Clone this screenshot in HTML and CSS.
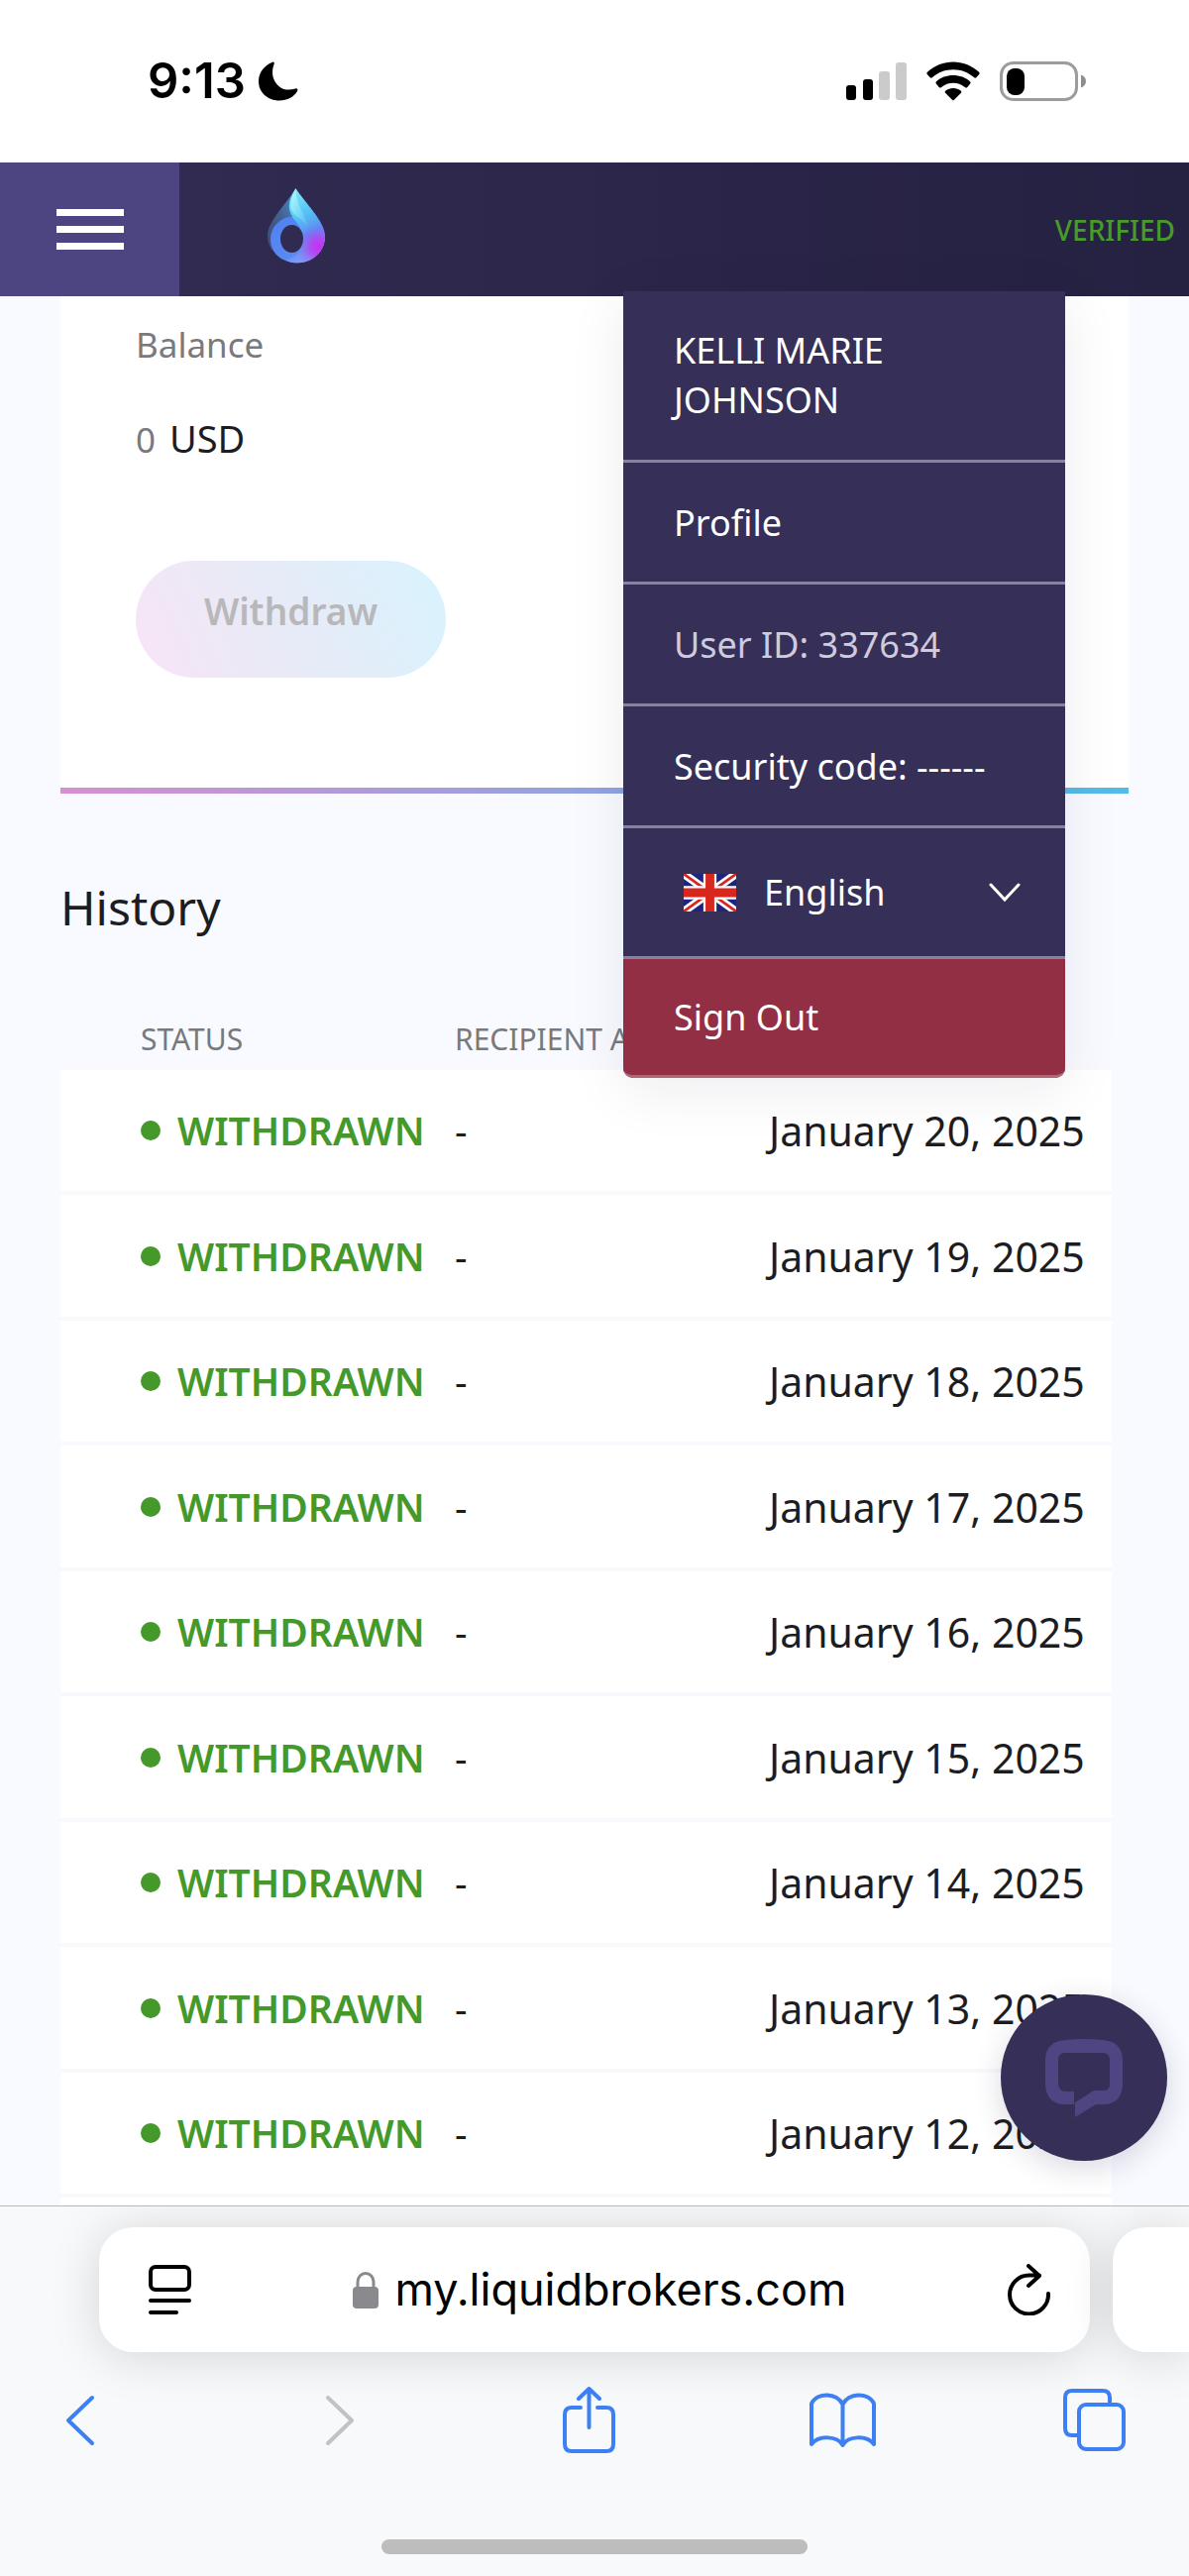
FILE: index.html
```html
<!DOCTYPE html>
<html lang="en">
<head>
<meta charset="utf-8">
<meta name="viewport" content="width=device-width, initial-scale=1">
<title>Liquid Brokers – Withdraw</title>
<link rel="stylesheet" href="styles.css">
</head>
<body>
<div class="status-bar">
  <span class="clock">9:13</span>
  <svg class="moon" width="40" height="40" viewBox="0 0 40 40" aria-hidden="true"><path d="M13.500 1C15 0 16.500 1 15.500 3C12 12 15 21 21 25.500C26 29.500 32 29 37 27.500C39 27 40 28 39 30C35.500 36 29 39.500 21 39.500C9 39.500 0 31 0 20C0 11 6 4 13.500 1Z"/></svg>
  <div class="status-icons">
    <svg width="61" height="40" viewBox="0 0 61 40" aria-hidden="true"><rect y="24" width="10" height="15" rx="3"/><rect x="17" y="18" width="10" height="21" rx="3"/><g fill="#cbcbcb"><rect x="33" y="10" width="11" height="29" rx="3"/><rect x="50" y="1" width="11" height="38" rx="3"/></g></svg>
    <svg width="54" height="40" viewBox="0 0 54 40" aria-hidden="true"><path d="M1.200 13.500a2 2 0 0 1 0-3C8.500 4 17.500.500 27 .500S45.500 4 52.800 10.500a2 2 0 0 1 0 3L50.500 16a1.800 1.800 0 0 1-2.600 0C42 11 35 8.300 27 8.300S12 11 6.100 16a1.800 1.800 0 0 1-2.600 0Z"/><path d="M10 22.800a1.800 1.800 0 0 1 0-2.600C14.500 16.200 20.500 14 27 14s12.500 2.200 17 6.200a1.800 1.800 0 0 1 0 2.600L41.300 26a1.800 1.800 0 0 1-2.500 0C35.500 23.300 31.500 21.800 27 21.800S18.500 23.300 15.200 26a1.800 1.800 0 0 1-2.500 0Z"/><path d="M19.300 32a1.600 1.600 0 0 1 .1-2.500C21.500 28 24 27 27 27s5.500 1 7.600 2.500a1.600 1.600 0 0 1 .1 2.500L28 38.800a1.400 1.400 0 0 1-2 0Z"/></svg>
    <svg width="88" height="40" viewBox="0 0 88 40" aria-hidden="true"><rect x="1.500" y="1.500" width="76" height="37" rx="12" fill="none" stroke="#9c9c9c" stroke-width="3"/><rect x="7" y="7" width="18" height="27" rx="8"/><path d="M82 13.500c3 1 5 3.500 5 6.500s-2 5.500-5 6.500Z" fill="#8e8e8e"/></svg>
  </div>
</div>

<header class="site-header">
  <button class="menu-toggle" type="button" aria-label="Open menu"><span></span><span></span><span></span></button>
  <a class="logo" href="#" aria-label="Home">
    <svg width="58" height="76" viewBox="0 0 58 76" aria-hidden="true">
      <defs>
        <linearGradient id="dropBody" x1="0.300" y1="0" x2="0.600" y2="1"><stop offset="0" stop-color="#7deafb"/><stop offset=".35" stop-color="#57c3f5"/><stop offset=".65" stop-color="#5a8df0"/><stop offset="1" stop-color="#8f9cf6"/></linearGradient>
        <radialGradient id="dropGlow" gradientUnits="userSpaceOnUse" cx="52" cy="59" r="24"><stop offset="0" stop-color="#c92df2"/><stop offset=".4" stop-color="#b83df2" stop-opacity=".8"/><stop offset="1" stop-color="#7a78f2" stop-opacity="0"/></radialGradient>
        <linearGradient id="dropRing" x1="0" y1="0" x2="1" y2="1"><stop offset="0" stop-color="#4f80ee"/><stop offset=".7" stop-color="#5a8bf6"/><stop offset="1" stop-color="#8f7bf5"/></linearGradient>
        <linearGradient id="dropBack" x1="1" y1="0" x2="0" y2="1"><stop offset="0" stop-color="#4d8fd8"/><stop offset=".5" stop-color="#42608f"/><stop offset="1" stop-color="#3c4a7c"/></linearGradient>
        <linearGradient id="dropShine" x1="0" y1="0" x2="1" y2="1"><stop offset="0" stop-color="#b5fbff"/><stop offset="1" stop-color="#79d8f8" stop-opacity=".2"/></linearGradient>
      </defs>
      <path d="M28.500 0C20 15 0 33 0 48c0 6 2 11 5 15l18-30Z" fill="url(#dropBack)"/>
      <path d="M26 28C12 30 3 39 3 52c0 13 11 23 26 23 16 0 29-11 29-27L36 30Z" fill="url(#dropRing)"/>
      <path d="M28.500 0C37 14 58 33 58 48c0 16-12 27.500-29 27.500-3 0-8-1-11-3C30 70 36 62 36 51c0-7-3-12-7-17C19 24 20 13 28.500 0Z" fill="url(#dropBody)"/>
      <path d="M28.500 0C37 14 58 33 58 48c0 16-12 27.500-29 27.500-3 0-8-1-11-3C30 70 36 62 36 51c0-7-3-12-7-17C19 24 20 13 28.500 0Z" fill="url(#dropGlow)"/>
      <path d="M28.500 1C21 14 22 22 29 28c4 3 8 5 11 11C38 25 29 18 28.500 1Z" fill="url(#dropShine)"/>
      <ellipse cx="24.500" cy="51" rx="11.500" ry="14" fill="#322b51"/>
    </svg>
  </a>
  <span class="verified">VERIFIED</span>

  <nav class="user-menu" aria-label="Account">
    <div class="menu-item user-name">KELLI MARIE JOHNSON</div>
    <a class="menu-item" href="#">Profile</a>
    <div class="menu-item muted">User ID: 337634</div>
    <div class="menu-item">Security code: ------</div>
    <button class="menu-item language" type="button">
      <svg class="flag" width="53" height="38" viewBox="0 0 60 42" preserveAspectRatio="none" aria-hidden="true"><rect width="60" height="42" fill="#1d2580"/><path d="M0 0 60 42M60 0 0 42" stroke="#fff" stroke-width="9"/><path d="M0 0 60 42M60 0 0 42" stroke="#d8281e" stroke-width="3"/><path d="M30 0V42M0 21H60" stroke="#fff" stroke-width="15"/><path d="M30 0V42M0 21H60" stroke="#d8281e" stroke-width="10"/></svg>
      <span>English</span>
      <svg class="chevron" width="32" height="20" viewBox="0 0 32 20" aria-hidden="true"><path d="M2 2 16 17 30 2" fill="none" stroke="#fff" stroke-width="3" stroke-linecap="round"/></svg>
    </button>
    <button class="menu-item sign-out" type="button">Sign Out</button>
  </nav>
</header>

<main class="content">
  <section class="balance-card">
    <p class="label">Balance</p>
    <p class="amount"><span>0</span> USD</p>
    <button class="withdraw" type="button" disabled>Withdraw</button>
  </section>

  <section class="history">
    <h2>History</h2>
    <table>
      <colgroup><col class="col-status"><col class="col-recipient"><col></colgroup>
      <thead><tr><th>STATUS</th><th>RECIPIENT A</th><th></th></tr></thead>
      <tbody>
        <tr><td><span class="state">WITHDRAWN</span></td><td>-</td><td>January 20, 2025</td></tr>
        <tr><td><span class="state">WITHDRAWN</span></td><td>-</td><td>January 19, 2025</td></tr>
        <tr><td><span class="state">WITHDRAWN</span></td><td>-</td><td>January 18, 2025</td></tr>
        <tr><td><span class="state">WITHDRAWN</span></td><td>-</td><td>January 17, 2025</td></tr>
        <tr><td><span class="state">WITHDRAWN</span></td><td>-</td><td>January 16, 2025</td></tr>
        <tr><td><span class="state">WITHDRAWN</span></td><td>-</td><td>January 15, 2025</td></tr>
        <tr><td><span class="state">WITHDRAWN</span></td><td>-</td><td>January 14, 2025</td></tr>
        <tr><td><span class="state">WITHDRAWN</span></td><td>-</td><td>January 13, 2025</td></tr>
        <tr><td><span class="state">WITHDRAWN</span></td><td>-</td><td>January 12, 2025</td></tr>
      </tbody>
    </table>
  </section>

  <button class="chat" type="button" aria-label="Open chat">
    <svg width="78" height="79" viewBox="0 0 78 79" aria-hidden="true"><path fill="#4e4582" fill-rule="evenodd" d="M20 1Q39-1 58 1C71 2 78 9 78 21V45C78 58 71 66 59 66H51L30 79V64L49 52H59Q65 52 65 46V21Q65 14 58 14H20Q13 14 13 21V44Q13 53 21 53H29V66H20C7 66 0 58 0 45V21C0 9 7 2 20 1Z"/></svg>
  </button>
</main>

<footer class="browser">
  <div class="tabs">
    <div class="address">
      <svg width="43" height="50" viewBox="0 0 43 50" fill="none" stroke="#000" stroke-width="4" stroke-linecap="round" aria-hidden="true"><rect x="2" y="2" width="39" height="23" rx="5"/><path d="M2 36H41M2 48H28"/></svg>
      <span class="url"><svg width="26" height="37" viewBox="0 0 26 37" aria-hidden="true"><path d="M5 18V10a8 8.500 0 0 1 16 0v8" fill="none" stroke="#8a8a8e" stroke-width="3"/><rect y="15" width="26" height="22" rx="4" fill="#8a8a8e"/></svg>my.liquidbrokers.com</span>
      <svg width="43" height="52" viewBox="0 0 43 52" fill="none" stroke="#000" stroke-width="4" stroke-linecap="round" stroke-linejoin="round" aria-hidden="true"><path d="M41 30A19.500 19.500 0 1 1 21.500 11.500H32M21 2 32 12 21 22"/></svg>
    </div>
    <div class="next-tab"></div>
  </div>
  <div class="toolbar">
    <button type="button" aria-label="Back"><svg width="30" height="52" viewBox="0 0 30 52"><path d="M27 3 3 26 27 49"/></svg></button>
    <button type="button" aria-label="Forward" disabled><svg width="30" height="52" viewBox="0 0 30 52"><path d="M3 3 27 26 3 49"/></svg></button>
    <button type="button" aria-label="Share"><svg width="53" height="67" viewBox="0 0 53 67"><path d="M18 21H9Q2 21 2 28V58Q2 65 9 65H44Q51 65 51 58V28Q51 21 44 21H35M26.500 41V2M16 12 26.500 2 37 12"/></svg></button>
    <button type="button" aria-label="Bookmarks"><svg width="67" height="56" viewBox="0 0 67 56"><path d="M33.500 12C28 0 8-1 2 11V52C9 43 28 43 33.500 53C39 43 58 43 65 52V11C59-1 39 0 33.500 12V52"/></svg></button>
    <button type="button" aria-label="Tabs"><svg width="63" height="63" viewBox="0 0 63 63"><path d="M47 15V9Q47 2 40 2H9Q2 2 2 9V40Q2 47 9 47H15"/><rect x="16" y="16" width="45" height="45" rx="7"/></svg></button>
  </div>
  <div class="home-indicator"></div>
</footer>
</body>
</html>
```

FILE: styles.css
```css
* { box-sizing: border-box; }

body {
  margin: 0;
  min-height: 100vh;
  display: flex;
  flex-direction: column;
  background: #f8faff;
  color: #1d1d1f;
  font-family: "Noto Sans", "Open Sans", sans-serif;
  font-size: 36px;
  line-height: 50px;
  overflow-x: hidden;
}

h2, p { margin: 0; font-weight: 400; }

button {
  border: 0;
  padding: 0;
  background: none;
  color: inherit;
  font: inherit;
}

svg { display: block; flex: none; }

/* Phone status bar */
.status-bar {
  display: flex;
  align-items: center;
  height: 164px;
  padding: 0 103px 0 149px;
  background: #fff;
}

.clock {
  font-family: Inter, sans-serif;
  font-size: 49px;
  font-weight: 600;
  color: #000;
}

.moon { margin-left: 13px; }

.status-icons {
  display: flex;
  gap: 20px;
  margin-left: auto;
}

/* Site header */
.site-header {
  position: relative;
  z-index: 2;
  display: flex;
  align-items: center;
  height: 135px;
  padding-right: 14px;
  background: linear-gradient(90deg, #342c54, #242141);
}

.menu-toggle {
  display: flex;
  flex-direction: column;
  align-items: center;
  justify-content: center;
  gap: 10px;
  align-self: stretch;
  width: 181px;
  background: #4d4581;
}

.menu-toggle span {
  width: 68px;
  height: 7px;
  background: #fff;
}

.logo { margin: 0 auto 8px 89px; }

.verified {
  color: #489b29;
  font-size: 28px;
  font-weight: 500;
}

/* Account drop-down */
.user-menu {
  position: absolute;
  top: 130px;
  right: 125px;
  width: 446px;
  background: #362f57;
  color: #fff;
  border-radius: 0 0 10px 10px;
  box-shadow: 0 12px 60px rgba(30, 25, 70, .08);
}

.menu-item {
  display: flex;
  align-items: center;
  width: 100%;
  padding: 36px 51px 34px;
  border-bottom: 3px solid #8682a0;
  color: #fff;
  text-align: left;
  text-decoration: none;
}

.user-name { padding: 35px 120px 35px 51px; }
.muted { color: #cfcbdf; }

.language { padding: 40px 45px 39px 61px; }
.language span { margin-left: 28px; }
.chevron { margin-left: auto; }

.sign-out {
  padding: 34px 51px 33px;
  background: #922f45;
  border-bottom-color: #ac6a7b;
  border-radius: 0 0 10px 10px;
}

/* Page */
.content {
  position: relative;
  padding: 0 61px;
}

.balance-card {
  padding: 24px 76px 111px;
  background: #fff;
  border-bottom: 6px solid;
  border-image: linear-gradient(90deg, #d78fd2, #8aa5e2 55%, #54bbe8 90%) 1;
}

.label {
  color: #7a7a7c;
  font-size: 35px;
}

.amount {
  margin: 44px 0 99px;
  font-size: 38px;
}

.amount span {
  margin-right: 4px;
  color: #7a7a7c;
  font-size: 35px;
  line-height: 1;
}

.withdraw {
  display: block;
  width: 313px;
  height: 118px;
  padding-bottom: 16px;
  border-radius: 59px;
  background: linear-gradient(65deg, #f8e4f6, #e6ebf7 50%, #d8f3fe);
  color: #b8b8ba;
  font-size: 37px;
  font-weight: 600;
}

.history h2 {
  padding: 83px 0 81px;
  font-size: 48px;
  line-height: 64px;
}

.history table {
  width: 100%;
  padding-right: 17px;
  table-layout: fixed;
  border-collapse: separate;
  border-spacing: 0;
}

.history::after {
  content: "";
  display: block;
  height: 8px;
  margin-right: 17px;
  background: #fff;
}

.col-status { width: 398px; }
.col-recipient { width: 317px; }

.history th {
  padding: 0 0 11px;
  color: #77797d;
  font-size: 30px;
  font-weight: 400;
  line-height: 40px;
  text-align: left;
  white-space: nowrap;
}

.history th:first-child,
.history td:first-child { padding-left: 81px; }

.history td {
  height: 126px;
  padding: 0;
  background: #fff;
  border-bottom: 4px solid #f8f9fd;
  font-size: 39px;
  white-space: nowrap;
}

.history tr:nth-child(even) td { height: 127px; }

.history td:last-child { font-size: 41px; }

.state {
  display: flex;
  align-items: center;
  gap: 17px;
  color: #45992a;
  font-weight: 600;
}

.state::before {
  content: "";
  width: 20px;
  height: 20px;
  border-radius: 50%;
  background: currentColor;
}

.chat {
  position: absolute;
  right: 22px;
  bottom: 45px;
  display: grid;
  place-items: center;
  width: 168px;
  height: 168px;
  border-radius: 50%;
  background: #362f57;
  box-shadow: 0 8px 30px rgba(30, 25, 70, .16);
}

/* Browser controls */
.browser {
  flex: 1;
  border-top: 1px solid #b8b8ba;
  background: #f8f9fb;
  overflow: hidden;
}

.tabs {
  display: flex;
  gap: 23px;
  padding: 21px 0 0 100px;
}

.address,
.next-tab {
  height: 126px;
  background: #fff;
  border-radius: 34px;
  box-shadow: 0 4px 50px rgba(0, 0, 0, .15);
}

.address {
  flex: 1;
  display: flex;
  align-items: center;
  justify-content: space-between;
  padding: 0 40px 0 50px;
}

.next-tab {
  width: 77px;
  border-radius: 34px 0 0 34px;
}

.url {
  display: flex;
  align-items: center;
  gap: 17px;
  color: #000;
  font-family: Inter, sans-serif;
  font-size: 45px;
}

.toolbar {
  display: grid;
  grid-template-columns: 262fr 240fr 249fr 256fr auto;
  align-items: center;
  padding: 35px 64px 0 66px;
}

.toolbar svg {
  fill: none;
  stroke: #3c80f3;
  stroke-width: 4;
  stroke-linecap: round;
  stroke-linejoin: round;
}

.toolbar button:disabled svg { stroke: #c2c2c4; }

.home-indicator {
  width: 430px;
  height: 15px;
  margin: 87px auto 0;
  border-radius: 8px;
  background: #bdbdbd;
}
```
